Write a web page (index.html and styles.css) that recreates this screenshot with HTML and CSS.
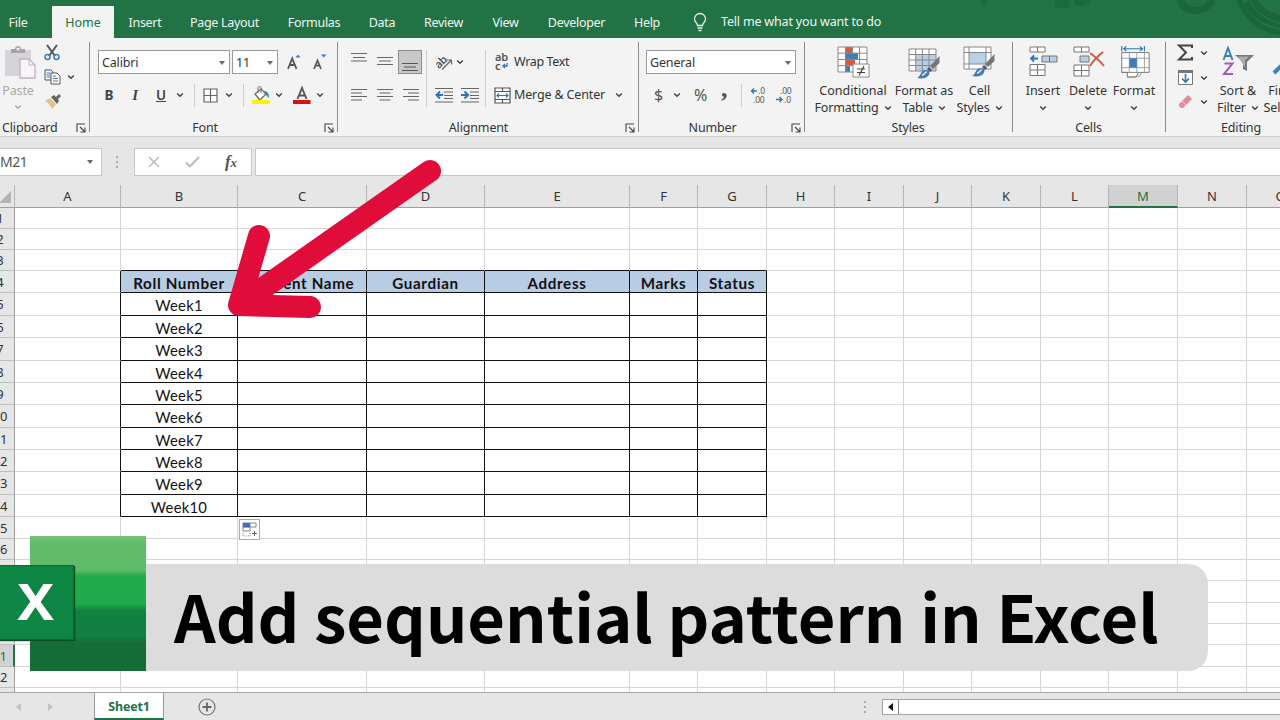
FILE: index.html
```html
<!DOCTYPE html>
<html lang="en">
<head>
<meta charset="utf-8">
<title>Add sequential pattern in Excel</title>
<link rel="stylesheet" href="styles.css">
</head>
<body>
<svg class="defs" width="0" height="0">
  <defs>
    <symbol id="chev" viewBox="0 0 8 6"><path d="M1.200 1.500 4 4.200 6.800 1.500" fill="none" stroke="#444" stroke-width="1.500"/></symbol>
    <symbol id="tri" viewBox="0 0 8 6"><path d="M1 1h6L4 5z" fill="#666"/></symbol>
    <symbol id="launch" viewBox="0 0 10 10"><path d="M1 9V1h8M4 4l4.500 4.500M9 4.500V9H4.500" fill="none" stroke="#444" stroke-width="1.100"/></symbol>
    <symbol id="brush" viewBox="0 0 24 24"><path d="M23.500 1v7l-6.500 6-3-3z" fill="#777"/><path d="M13 12l3 3-2 2-3-3z" fill="#555"/><path d="M1 23c4-1 3-8 9-8 3 0 5 3 2 6-3 3-8 2.500-11 2z" fill="#3e7cbc"/><path d="M6 20c3 0 2-3 5-3" stroke="#e8f0f8" stroke-width="1.500" fill="none"/></symbol>
  </defs>
</svg>
<div class="app">
  <nav class="tabs">
    <span class="tab file">File</span><span class="tab home">Home</span><span class="tab insert">Insert</span><span class="tab layout">Page Layout</span><span class="tab formulas">Formulas</span><span class="tab data">Data</span><span class="tab review">Review</span><span class="tab view">View</span><span class="tab developer">Developer</span><span class="tab help">Help</span>
    <svg class="bulb" width="14" height="19" viewBox="0 0 14 19"><path d="M4.500 12.500C4.500 10 1.500 9 1.500 6a5.500 5.500 0 0 1 11 0c0 3-3 4-3 6.500zM4.500 15h5M5.500 17.500h3" fill="none" stroke="#e8f2ec" stroke-width="1.300"/></svg>
    <span class="tell">Tell me what you want to do</span>
    <svg class="swirl" width="320" height="38" viewBox="0 0 320 38"><g fill="none" stroke="#1b653b"><path d="M20 0l4 7 4-7z" fill="#1d693e" stroke="none"/><path d="M95 0h14v8H95zM114 0c0 8 10 8 18 0" fill="#1d693e" stroke="none"/><path d="M220 0c5 14 26 14 32 0" stroke-width="7"/><path d="M279 0c7 18 22 31 44 33" stroke-width="5"/><path d="M290 0c5 11 16 18 32 21" stroke-width="14"/><path d="M290 0c6 14 18 20 32 24M299 0c4 8 12 12 22 14" stroke="#2a7a4d"/></g></svg>
  </nav>

  <section class="ribbon">
    <div class="group clipboard">
      <div class="clip-body">
        <div class="paste"><svg width="34" height="34" viewBox="0 0 34 34"><path d="M3 4h26v26H3z" fill="#d6d4d8"/><path d="M9 7V3h4c0-4 6-4 6 0h4v4z" fill="#a5a3a7"/><circle cx="16" cy="3" r="1.500" fill="#f3f3f3"/><path d="M18 13h9l6 6v13H18z" fill="#f8f5fa" stroke="#bbb5be" stroke-width="1.300"/><path d="M27 13v6h6" fill="none" stroke="#bbb5be"/></svg><span>Paste</span><svg class="chev pale" width="8" height="6"><use href="#chev"/></svg></div>
        <div class="clip-tools">
          <svg width="16" height="17" viewBox="0 0 16 17"><path d="M3 1l8 11M13 1L5 12" stroke="#555" stroke-width="2"/><circle cx="3.500" cy="13" r="2.500" fill="none" stroke="#3e7cbc" stroke-width="1.500"/><circle cx="12.500" cy="13" r="2.500" fill="none" stroke="#3e7cbc" stroke-width="1.500"/></svg>
          <div class="pair"><svg width="17" height="16" viewBox="0 0 17 16"><path d="M1 1h6l2 2v8H1z" fill="#fff" stroke="#555"/><path d="M2.500 4h4M2.500 6h4M2.500 8h4" stroke="#3e7cbc"/><path d="M7 4h6l3 3v8H7z" fill="#fff" stroke="#555"/><path d="M9 7h3M9 9.500h5M9 12h5" stroke="#3e7cbc"/></svg><svg class="chev" width="8" height="6"><use href="#chev"/></svg></div>
          <svg width="18" height="17" viewBox="0 0 18 17"><path d="M1 8l5-3 6 6-4 5C7 12 4 10 1 8z" fill="#e6c07f"/><path d="M7 4l3-2 2 2 3-3 2 2-3 3 1 2-2 3z" fill="#666"/></svg>
        </div>
      </div>
      <div class="caption"><span>Clipboard</span><svg width="10" height="10"><use href="#launch"/></svg></div>
    </div>

    <div class="group font">
      <div class="row r1">
        <div class="field face"><span>Calibri</span><svg width="8" height="6"><use href="#tri"/></svg></div>
        <div class="field size"><span>11</span><svg width="8" height="6"><use href="#tri"/></svg></div>
        <svg class="grow" width="14" height="18" viewBox="0 0 14 18"><path d="M1 16 5.200 5.500 9.500 16M2.700 12h5" fill="none" stroke="#555" stroke-width="1.800"/><path d="M8.500 4.500 11 1.500l2.500 3z" fill="#3e7cbc"/></svg>
        <svg class="shrink" width="14" height="18" viewBox="0 0 14 18"><path d="M1 16 4.500 7.500 8 16M2.500 12.700h4" fill="none" stroke="#555" stroke-width="1.700"/><path d="M8 1.500h5.500L10.700 4.500z" fill="#3e7cbc"/></svg>
      </div>
      <div class="row r2">
        <b class="bt b">B</b><i class="bt i">I</i><u class="bt u">U</u><svg class="chev c1" width="8" height="6"><use href="#chev"/></svg><span class="rule"></span>
        <svg class="borders" width="15" height="15" viewBox="0 0 15 15"><path d="M1 1h13v13H1zM7.500 1v13M1 7.500h13" fill="#fff" stroke="#666" stroke-width="1.200"/></svg><svg class="chev c2" width="8" height="6"><use href="#chev"/></svg><span class="rule s2"></span>
        <svg class="fill" width="18" height="18" viewBox="0 0 18 18"><path d="M3 8l6-5 5 5-6 6z" fill="#fff" stroke="#666" stroke-width="1.200"/><path d="M6 7V2c0-2 3-2 3 0v5" fill="none" stroke="#666"/><path d="M12 5c3 0 5 2 5 7-2-1-2-3-4-4z" fill="#3e7cbc"/><path d="M0 14h17.500v4H0z" fill="#fff200"/></svg><svg class="chev c3" width="8" height="6"><use href="#chev"/></svg>
        <svg class="ink" width="18" height="18" viewBox="0 0 18 18"><path d="M4.500 13 9 2l4.500 11M6 9.500h6" fill="none" stroke="#555" stroke-width="1.900"/><path d="M0 14h17.500v4H0z" fill="#d81212"/></svg><svg class="chev c4" width="8" height="6"><use href="#chev"/></svg>
      </div>
      <div class="caption"><span>Font</span><svg width="10" height="10"><use href="#launch"/></svg></div>
    </div>

    <div class="group align">
      <div class="al-body">
        <div class="al-left">
          <div class="row r1"><svg width="16" height="24" viewBox="0 0 16 24"><path d="M0 3.500h16M2 7.500h12M0 11h16" stroke="#666" stroke-width="1.200"/></svg><svg width="16" height="24" viewBox="0 0 16 24"><path d="M0 7.500h16M2 11h12M0 14.500h16" stroke="#666" stroke-width="1.200"/></svg><span class="pressed"><svg width="16" height="22" viewBox="0 0 16 22"><path d="M0 12.500h16M2 16h12M0 19.500h16" stroke="#555" stroke-width="1.200"/></svg></span></div>
          <div class="row r2"><svg width="16" height="24" viewBox="0 0 16 24"><path d="M0 6.500h16M0 10h11M0 13.500h16M0 17h11" stroke="#666" stroke-width="1.200"/></svg><svg width="16" height="24" viewBox="0 0 16 24"><path d="M0 6.500h16M2.500 10h11M0 13.500h16M2.500 17h11" stroke="#666" stroke-width="1.200"/></svg><svg width="16" height="24" viewBox="0 0 16 24"><path d="M0 6.500h16M5 10h11M0 13.500h16M5 17h11" stroke="#666" stroke-width="1.200"/></svg></div>
        </div>
        <div class="al-mid">
          <div class="row r1"><svg width="19" height="18" viewBox="0 0 19 18"><text x="0" y="13" transform="rotate(-45 6 10)" class="ico ab">ab</text><path d="M7 16.500 16 7.500M12 7h4.500v4.500" fill="none" stroke="#666" stroke-width="1.200"/></svg><svg class="chev" width="8" height="6"><use href="#chev"/></svg></div>
          <div class="row r2 ind"><svg width="18" height="16" viewBox="0 0 18 16"><path d="M0 1.500h18M9 5h9M9 8.500h9M9 11.500h9M0 15h18" stroke="#666" stroke-width="1.200"/><path d="M8 8H2M5 4.500 1.500 8 5 11.500" fill="none" stroke="#2f74b5" stroke-width="2"/></svg><svg width="18" height="16" viewBox="0 0 18 16"><path d="M0 1.500h18M9 5h9M9 8.500h9M9 11.500h9M0 15h18" stroke="#666" stroke-width="1.200"/><path d="M0 8h6M3.500 4.500 7 8l-3.500 3.500" fill="none" stroke="#2f74b5" stroke-width="2"/></svg></div>
        </div>
        <div class="al-right">
          <div class="row r1"><svg width="16" height="18" viewBox="0 0 16 18"><text x="1" y="8" class="ico ab">ab</text><text x="1" y="17" class="ico ab">c</text><path d="M13 10v3H9M11 11l-2 2 2 2" fill="none" stroke="#2f74b5" stroke-width="1.300"/></svg><span class="wrap">Wrap Text</span></div>
          <div class="row r2"><svg width="17" height="17" viewBox="0 0 17 17"><path d="M1 1h15v15H1zM1 4.500h15M1 12.500h15M8.500 1v3.500M8.500 12.500V16" fill="#fff" stroke="#555" stroke-width="1.200"/><path d="M3 8.500h11M5 6.500l-2 2 2 2M12 6.500l2 2-2 2" fill="none" stroke="#2f74b5" stroke-width="1.100"/></svg><span class="merge">Merge &amp; Center</span><svg class="chev" width="8" height="6"><use href="#chev"/></svg></div>
        </div>
      </div>
      <div class="caption"><span>Alignment</span><svg width="10" height="10"><use href="#launch"/></svg></div>
    </div>

    <div class="group number">
      <div class="row r1"><div class="field general"><span>General</span><svg width="8" height="6"><use href="#tri"/></svg></div></div>
      <div class="row r2"><span class="sym dollar">$</span><svg class="chev" width="8" height="6"><use href="#chev"/></svg><span class="sym pct">%</span><b class="sym comma">,</b><span class="rule s3"></span>
        <svg class="dec" width="17" height="16" viewBox="0 0 17 16"><text x="8" y="7" class="ico dg">.0</text><text x="3" y="15.500" class="ico dg">.00</text><path d="M7 4H1.500M4 1.500 1.500 4 4 6.500" fill="none" stroke="#2f74b5" stroke-width="1.400"/></svg>
        <svg class="dec d2" width="17" height="16" viewBox="0 0 17 16"><text x="4" y="7" class="ico dg">.00</text><text x="8" y="15.500" class="ico dg">.0</text><path d="M0 12.500h6M3.500 10 6 12.500 3.500 15" fill="none" stroke="#2f74b5" stroke-width="1.400"/></svg></div>
      <div class="caption"><span>Number</span><svg width="10" height="10"><use href="#launch"/></svg></div>
    </div>

    <div class="group styles">
      <div class="bigs">
        <div class="big cf"><svg width="33" height="34" viewBox="0 0 33 34"><path d="M1 2h29v25H1z" fill="#fff"/><path d="M9 2h6v6H9zM9 14.500h9v6H9z" fill="#d35c3f"/><path d="M9 8h12v6H9zM9 21h4v6H9z" fill="#3e7cbc"/><path d="M1 2h29v25H1zM8.500 2v25M15.500 2v6M22.500 2v25M1 8.200h29M1 14.500h29M1 20.700h29" fill="none" stroke="#888"/><path d="M16 19h16v13H16z" fill="#fff" stroke="#888"/><path d="M20 24h8M20 27.500h8M27 21l-5 9.500" stroke="#444" stroke-width="1.200"/></svg><span>Conditional</span><span>Formatting <svg width="8" height="6"><use href="#chev"/></svg></span></div>
        <div class="big ft"><svg width="33" height="34" viewBox="0 0 33 34"><path d="M1 4h27v22H1z" fill="#fff"/><path d="M8 9h20v17H8z" fill="#b8cfe6"/><path d="M1 4h27v22H1zM7.700 4v22M14.400 4v22M21 4v22M1 9.500h27M1 15h27M1 20.500h27" fill="none" stroke="#888"/><use href="#brush" x="8" y="10" width="24" height="24"/></svg><span>Format as</span><span>Table <svg width="8" height="6"><use href="#chev"/></svg></span></div>
        <div class="big cs"><svg width="33" height="34" viewBox="0 0 33 34"><path d="M1 2h27v22H1z" fill="#fff"/><path d="M6 8h17v11H6z" fill="#b8cfe6"/><path d="M1 2h27v22H1zM6 2v22M23 2v22M1 7.500h27M1 19h27" fill="none" stroke="#888"/><use href="#brush" x="8" y="8" width="24" height="24"/></svg><span>Cell</span><span>Styles <svg width="8" height="6"><use href="#chev"/></svg></span></div>
      </div>
      <div class="caption"><span>Styles</span></div>
    </div>

    <div class="group cells">
      <div class="bigs">
        <div class="big ci"><svg width="33" height="34" viewBox="0 0 33 34"><path d="M3 2h15v5H3zM10.500 2v5M3 19.500h15v11H3zM10.500 19.500v11M3 25h15" fill="#fff" stroke="#777"/><path d="M15 11h15v6H15zM22.500 11v6" fill="#b8cfe6" stroke="#777"/><path d="M11 13.500H4M7 10.500l-3 3 3 3" fill="none" stroke="#2f74b5" stroke-width="1.800"/></svg><span>Insert</span><span><svg width="8" height="6"><use href="#chev"/></svg></span></div>
        <div class="big cd"><svg width="33" height="34" viewBox="0 0 33 34"><path d="M2 2h15v5H2zM9.500 2v5M2 20h15v11H2zM9.500 20v11M2 25.500h15" fill="#fff" stroke="#777"/><path d="M8 11h9v6H8z" fill="#b8cfe6" stroke="#777"/><path d="M18 8c4 3 10 8 14 13M31 7c-5 4-10 9-13 14" fill="none" stroke="#d9573d" stroke-width="2"/></svg><span>Delete</span><span><svg width="8" height="6"><use href="#chev"/></svg></span></div>
        <div class="big cm"><svg width="33" height="36" viewBox="0 0 33 36"><path d="M3 1v6M27 1v6M5 4h20M8 1.500 5 4l3 2.500M22 1.500 25 4l-3 2.500" fill="none" stroke="#2f74b5" stroke-width="1.200"/><path d="M3 8h29v21H3zM3 29h6v5h9l3-5" fill="#fff" stroke="#777"/><path d="M11 8v21M19 8v21M27 8v21M3 14h29M3 24h29M9 34l13-1 2-4" fill="none" stroke="#888" stroke-width=".8"/><path d="M11 14h8v10h-8z" fill="#3e7cbc"/></svg><span>Format</span><span><svg width="8" height="6"><use href="#chev"/></svg></span></div>
      </div>
      <div class="caption"><span>Cells</span></div>
    </div>

    <div class="group editing">
      <div class="bigs">
        <div class="edit-tools">
          <div class="pair"><svg width="17" height="17" viewBox="0 0 17 17"><path d="M15 4V1.500H2L9 8.500l-7 7h13V13" fill="none" stroke="#444" stroke-width="2"/></svg><svg class="chev" width="8" height="6"><use href="#chev"/></svg></div>
          <div class="pair"><svg width="17" height="17" viewBox="0 0 17 17"><path d="M1.500 1.500h14v14h-14z" fill="#fff" stroke="#777"/><path d="M1 1h15v3H1z" fill="#777"/><path d="M8.500 5v8M5 9.500l3.500 3.500L12 9.500" fill="none" stroke="#2f74b5" stroke-width="1.600"/></svg><svg class="chev" width="8" height="6"><use href="#chev"/></svg></div>
          <div class="pair"><svg width="17" height="15" viewBox="0 0 17 15"><path d="M2 10 11 1l4 4-9 9H4l-2-2z" fill="#e58a9b"/><path d="M5 7l4.500 4.500" stroke="#f7d4da"/></svg><svg class="chev" width="8" height="6"><use href="#chev"/></svg></div>
        </div>
        <div class="big sort"><svg width="33" height="34" viewBox="0 0 33 34"><path d="M1.500 15 6 3l4.500 12M3 11h6" fill="none" stroke="#3e7cbc" stroke-width="2"/><path d="M2.500 18.500h8L2 29h9" fill="none" stroke="#a05bc0" stroke-width="2"/><path d="M13 10h19l-7 7v9l-4-2v-7z" fill="#777"/><path d="M16 11.500h11l-4 4v7z" fill="#aaa"/></svg><span>Sort &amp;</span><span>Filter <svg width="8" height="6"><use href="#chev"/></svg></span></div>
        <div class="big find"><svg width="33" height="34" viewBox="0 0 33 34"><circle cx="20" cy="11" r="9" fill="#fff" stroke="#3e7cbc" stroke-width="2.500"/><path d="M13 18 3 28" stroke="#3e7cbc" stroke-width="4"/></svg><span>Find &amp;</span><span>Select <svg width="8" height="6"><use href="#chev"/></svg></span></div>
      </div>
      <div class="caption"><span>Editing</span></div>
    </div>
  </section>

  <section class="formula-bar">
    <div class="name-box"><span>M21</span><svg width="10" height="6" viewBox="0 0 8 6"><use href="#tri"/></svg></div>
    <svg class="grip" width="4" height="14" viewBox="0 0 4 14"><path d="M1 1h2v2H1zM1 6h2v2H1zM1 11h2v2H1z" fill="#aaa"/></svg>
    <div class="fx-box"><svg width="12" height="12" viewBox="0 0 12 12"><path d="M1 1l10 10M11 1 1 11" stroke="#bbb" stroke-width="1.500"/></svg><svg width="15" height="12" viewBox="0 0 15 12"><path d="M1 6.500l4 4L14 1" fill="none" stroke="#bbb" stroke-width="2"/></svg><span class="fx">f<small>x</small></span></div>
    <div class="formula-input"></div>
  </section>

  <section class="sheet" id="sheet"></section>

  <footer class="bottom">
    <svg width="6" height="8" viewBox="0 0 6 8"><path d="M5 0v8L0 4z" fill="#c0c0c0"/></svg>
    <svg class="next" width="6" height="8" viewBox="0 0 6 8"><path d="M1 0v8l5-4z" fill="#c0c0c0"/></svg>
    <div class="sheet-tab">Sheet1</div>
    <svg class="add" width="18" height="18" viewBox="0 0 18 18"><circle cx="9" cy="9" r="8" fill="none" stroke="#777" stroke-width="1.200"/><path d="M9 4.500v9M4.500 9h9" stroke="#666" stroke-width="1.800"/></svg>
    <svg class="grip2" width="4" height="12" viewBox="0 0 4 12"><path d="M1 0h2v2H1zM1 5h2v2H1zM1 10h2v2H1z" fill="#aaa"/></svg>
    <div class="scroll"><span class="left"><svg width="5" height="8" viewBox="0 0 5 8"><path d="M5 0v8L0 4z" fill="#111"/></svg></span></div>
  </footer>

  <div class="autofill"><svg width="16" height="16" viewBox="0 0 16 16"><path d="M1 1h13v4H1zM1 5h7v4H1zM8 1v4" fill="#fff" stroke="#888"/><path d="M1 1h7v4H1z" fill="#3e6fc0"/><path d="M1 11v3h7v-3" fill="none" stroke="#999" stroke-dasharray="1 1"/><path d="M12.500 9v5M10 11.500h5" stroke="#666"/></svg></div>
  <svg class="arrow" width="230" height="170" viewBox="220 155 230 170"><path d="M430 171 239 305M259 236 239 305 310 307" fill="none" stroke="#e00c3a" stroke-width="22" stroke-linecap="round" stroke-linejoin="round"/></svg>
  <div class="banner"><span>Add sequential pattern in Excel</span></div>
  <div class="logo"><div class="logo-tile"><span class="logo-x">X</span></div></div>
</div>
<script src="sheet.js"></script>
</body>
</html>
```
FILE: styles.css
```css
* { box-sizing: border-box; }
body { margin: 0; }
.app { position: relative; width: 1280px; height: 720px; overflow: hidden; background: #e6e6e6; font: 12.5px/16px "Noto Sans", "Open Sans", sans-serif; letter-spacing: -.15px; color: #333; display: flex; flex-direction: column; }
.defs { position: absolute; }
svg { display: block; flex: none; overflow: visible; }
.app span { white-space: nowrap; }

.tabs { height: 38px; flex: none; display: flex; align-items: flex-end; background: #217346; color: #eef6f1; position: relative; }
.tab { height: 32px; line-height: 33px; text-align: center; flex: none; letter-spacing: -.3px; }
.file { width: 36px; margin-right: 16px; }
.home { width: 62px; background: #f3f3f3; color: #217346; letter-spacing: 0; }
.insert { width: 62px; }
.layout { width: 97px; }
.formulas { width: 82px; }
.data { width: 54px; }
.review { width: 69px; }
.view { width: 55px; }
.developer { width: 87px; }
.help { width: 54px; }
.bulb { margin: 0 14px 6px 19px; }
.tell { line-height: 33px; letter-spacing: -.18px; }
.swirl { position: absolute; right: 0; top: 0; overflow: hidden; }

.ribbon { height: 99px; flex: none; display: flex; background: #f3f3f3; border-bottom: 1px solid #cfcfcf; }
.group { flex: none; display: flex; flex-direction: column; height: 98px; padding-top: 12px; }
.group + .group { background: linear-gradient(#888, #888) 0 4px / 1px 90px no-repeat; }
.clipboard { width: 89px; padding-top: 0; }
.font { width: 248px; margin-left: 0; }
.align { width: 301px; }
.number { width: 166px; }
.styles { width: 208px; padding-top: 0; }
.cells { width: 153px; padding-top: 0; }
.editing { width: 152px; padding-top: 0; }
.row { display: flex; align-items: center; height: 24px; }
.r2 { margin-top: 9px; }
.caption { margin-top: auto; height: 16px; display: flex; align-items: flex-start; justify-content: center; position: relative; }
.caption svg { position: absolute; right: 3px; top: 3px; }
.clipboard .caption { justify-content: flex-start; padding-left: 2px; }
.font .caption { padding-right: 16px; }
.align .caption { padding-right: 18px; }
.number .caption { padding-right: 17px; }

.clip-body { display: flex; }
.paste { width: 44px; padding-top: 8px; display: flex; flex-direction: column; align-items: center; color: #aaa; }
.paste svg:first-child { margin-left: -6px; }
.paste span { line-height: 18px; margin-left: -8px; margin-top: 2px; }
.paste .chev { margin: 4px 9px 0 0; }
.pale { opacity: .4; }
.clip-tools { display: flex; flex-direction: column; padding-top: 6px; gap: 8px; }
.pair { display: flex; align-items: center; gap: 6px; }

.field { height: 24px; background: #fff; border: 1px solid #999; display: flex; align-items: center; justify-content: space-between; padding: 1px 3px 0; }
.face { width: 132px; margin-left: 9px; }
.size { width: 46px; margin-left: 2px; }
.grow { margin-left: 9px; }
.shrink { margin-left: 12px; }
.bt { width: 14px; text-align: center; font-size: 13.5px; color: #444; }
.b { margin-left: 13px; }
.i { margin-left: 12px; font-family: "Liberation Serif", serif; font-weight: bold; font-size: 15px; }
.u { margin-left: 12px; font-weight: 600; }
.c1 { margin-left: 8px; }
.rule { width: 1px; height: 23px; background: #ccc; margin-left: 10px; }
.borders { margin-left: 8px; }
.c2 { margin-left: 7px; }
.fill { margin-left: 8px; }
.c3 { margin-left: 5px; }
.ink { margin-left: 10px; }
.c4 { margin-left: 5px; }

.al-body { display: flex; padding-left: 14px; }
.al-left { width: 76px; border-right: 1px solid #ccc; }
.al-left .row { gap: 10px; }
.pressed { width: 24px; height: 24px; background: #c8c8c8; border: 1px solid #8c8c8c; padding-left: 3px; margin-left: -5px; }
.al-mid { width: 59px; border-right: 1px solid #ccc; padding-left: 8px; }
.al-mid .chev { margin-left: 2px; }
.ind { gap: 8px; }
.al-right { padding-left: 8px; }
.al-right .row { gap: 3px; }
.al-right .chev { margin-left: 7px; }
.wrap { margin-left: 1px; letter-spacing: -.35px; }
.ico { font-family: "Noto Sans", sans-serif; fill: #555; }
.ab { font-size: 11px; font-weight: 600; }
.dg { font-size: 8.5px; }

.general { width: 150px; margin-left: 8px; }
.sym { font-size: 16px; color: #555; }
.dollar { margin-left: 16px; width: 10px; }
.number .chev { margin-left: 9px; }
.pct { margin-left: 13px; width: 16px; }
.comma { margin: -13px 0 0 11px; width: 8px; font: bold 26px/24px "Liberation Serif", serif; }
.s3 { margin-left: 12px; }
.dec { margin-left: 8px; }
.d2 { margin-left: 9px; }

.bigs { display: flex; }
.big { display: flex; flex-direction: column; align-items: center; padding-top: 7px; }
.big > svg { height: 34px; }
.big > span { line-height: 17px; height: 17px; display: flex; align-items: center; gap: 5px; }
.big > span:nth-of-type(1) { margin-top: 3px; letter-spacing: 0; }
.cf { width: 88px; margin-left: 5px; }
.ft { width: 54px; }
.cs { width: 57px; }
.ci { width: 46px; margin-left: 8px; }
.cd { width: 44px; }
.cm { width: 48px; }
.edit-tools { padding: 6px 0 0 12px; width: 52px; display: flex; flex-direction: column; gap: 8px; }
.sort { width: 42px; }
.find { width: 50px; flex: none; margin-left: 3px; }

.formula-bar { height: 48px; flex: none; display: flex; padding-top: 11px; }
.formula-bar > div { height: 28px; background: #fff; border: 1px solid #c6c6c6; }
.formula-bar > .name-box { width: 102px; border-left: 0; display: flex; align-items: center; justify-content: space-between; padding-right: 6px; font-size: 14px; color: #555; letter-spacing: -.5px; }
.grip { margin: 7px 15px 0 13px; }
.formula-bar > .fx-box { width: 118px; display: flex; align-items: center; padding-left: 13px; gap: 25px; }
.fx { font: italic bold 17px "Liberation Serif", serif; color: #555; }
.fx small { font-size: 13px; }
.formula-bar > .formula-input { flex: 1; margin-left: 3px; border-right: 0; }

.sheet { height: 507px; flex: none; overflow: hidden; background: #fff; font-family: Lato, sans-serif; font-size: 14.8px; color: #111; letter-spacing: .25px; }
.line { display: grid; margin-left: -14px; grid-template-columns: 29px 106px 117px 129px 118px 145px 68px 69px 68px 69px 68px 69px 68px 69px 69px 68px; }
.cell { border-right: 1px solid #d6d6d6; border-bottom: 1px solid #d6d6d6; display: flex; align-items: center; justify-content: center; overflow: hidden; padding-top: 2px; white-space: nowrap; }
.cell.hd, .cell.num { background: #e6e6e6; font-family: "Noto Sans", sans-serif; font-size: 13px; color: #333; letter-spacing: 0; }
.cell.hd { border-bottom-color: #9e9e9e; border-right-color: #b5b5b5; padding-top: 0; }
.cell.num { border-right-color: #9e9e9e; border-bottom-color: #bdbdbd; padding-top: 0; }
.cell.cur { color: #217346; background: #d2d2d2; }
.cell.hd.cur { border-bottom: 2px solid #217346; }
.cell.num.cur { border-right: 2px solid #217346; }
.cell.kr { border-right-color: #111; }
.cell.kb { border-bottom-color: #111; }
.cell.title { background: #b8cce4; font-weight: 700; font-size: 15.2px; letter-spacing: .65px; }

.bottom { height: 28px; flex: none; display: flex; align-items: center; border-top: 1px solid #a8a8a8; padding-left: 16px; }
.next { margin-left: 25px; }
.sheet-tab { width: 70px; height: 27px; margin: -1px 0 0 41px; background: #fff; border: 1px solid #999; border-top: 0; border-bottom: 2px solid #217346; color: #217346; font-weight: 700; text-align: center; line-height: 27px; }
.add { margin-left: 34px; }
.grip2 { margin-left: 647px; }
.scroll { flex: 1; margin-left: 15px; height: 16px; border: 1px solid #a5a5a5; border-right: 0; background: #fff; }
.left { display: flex; align-items: center; justify-content: center; width: 16px; height: 14px; border-right: 1px solid #888; }

.autofill { position: absolute; left: 239px; top: 519px; width: 21px; height: 21px; background: #fff; border: 1px solid #aaa; padding: 2px; }
.arrow { position: absolute; left: 220px; top: 155px; }
.banner { position: absolute; left: 120px; top: 564px; width: 1088px; height: 107px; border-radius: 0 20px 20px 0; background: #dcdcdc; padding-left: 54px; font: 700 65px/103px "Noto Sans CJK SC", sans-serif; letter-spacing: 0; color: #000; }
.logo { position: absolute; left: 30px; top: 536px; width: 116px; height: 135px; background: linear-gradient(#78c07e 0, #5fbb68 8px, #5fbb68 34px, #1faa4b 40px, #1faa4b 68px, #128040 75px, #128040 100px, #146c36 108px, #146c36); }
.logo-tile { width: 104px; height: 75px; margin: 29px 0 0 -60px; padding: 0 4px 0 31px; background: #0d8543; border: 1px solid #0a6a35; box-shadow: 1px 1px 1px #0a4d27; color: #fff; font: 700 50px/71px "Noto Sans", sans-serif; letter-spacing: 0; text-align: center; }
.logo-x { display: inline-block; transform: scaleX(1.1); }
```
FILE: sheet.js
```js
const letters = ['', 'A', 'B', 'C', 'D', 'E', 'F', 'G', 'H', 'I', 'J', 'K', 'L', 'M', 'N', 'O'];
const heights = [21, 21, 21, 22, 23, 22, 23, 22, 22, 23, 22, 22, 23, 22, 22, 21, 21, 22, 21, 21, 22, 21, 21];
const titles = ['Roll Number', 'Student Name', 'Guardian', 'Address', 'Marks', 'Status'];
const sheet = document.getElementById('sheet');

function addLine(height, build) {
  const line = document.createElement('div');
  line.className = 'line';
  line.style.height = height + 'px';
  letters.forEach((letter, col) => {
    const cell = document.createElement('div');
    cell.className = 'cell';
    build(cell, letter, col);
    line.append(cell);
  });
  sheet.append(line);
}

addLine(23, (cell, letter, col) => {
  cell.classList.add('hd');
  cell.textContent = letter;
  if (letter === 'M') cell.classList.add('cur');
  if (col === 0) {
    cell.innerHTML = '<svg width="28" height="15" viewBox="0 0 28 15"><path d="M25 2v12H13z" fill="#b4b4b4"/></svg>';
  }
});

heights.forEach((height, i) => {
  const row = i + 1;
  addLine(height, (cell, letter, col) => {
    if (col === 0) {
      cell.classList.add('num');
      cell.textContent = row;
      if (row === 21) cell.classList.add('cur');
      return;
    }
    const inRows = row >= 4 && row <= 14;
    const inCols = col >= 2 && col <= 7;
    if (inRows && col >= 1 && col <= 7) cell.classList.add('kr');
    if (inCols && row >= 3 && row <= 14) cell.classList.add('kb');
    if (inCols && row === 4) {
      cell.classList.add('title');
      cell.textContent = titles[col - 2];
    }
    if (col === 2 && row >= 5 && row <= 14) cell.textContent = 'Week' + (row - 4);
  });
});
```
